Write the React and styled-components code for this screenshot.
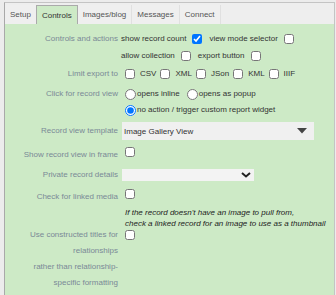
import React from 'react';
import styled, { createGlobalStyle } from 'styled-components';

const GlobalStyle = createGlobalStyle`
	html, body {
		margin: 0;
		padding: 0;
		background: #ececec;
		font-family: "Liberation Sans", Arial, sans-serif;
		font-size: 8px;
	}
`;

const TABS = ['Setup', 'Controls', 'Images/blog', 'Messages', 'Connect'];
const EXPORTS = ['CSV', 'XML', 'JSon', 'KML', 'IIIF'];

const App = () => {
	return (
		<>
			<GlobalStyle />
			<Frame>
				<TabBar>
					{TABS.map((tab) => (
						<Tab key={tab} $active={tab === 'Controls'}>{tab}</Tab>
					))}
				</TabBar>
				<Panel>
					<Row $top={0} $line={17}>
						<Label>Controls and actions</Label>
						<Value>
							<Option>show record count<Check type={'checkbox'} defaultChecked /></Option>
							<Option>view mode selector<Check type={'checkbox'} /></Option>
							<Option>allow collection<Check type={'checkbox'} /></Option>
							<Option>export button<Check type={'checkbox'} /></Option>
						</Value>
					</Row>
					<Row $top={2}>
						<Label>Limit export to</Label>
						<Value $indent={4}>
							{EXPORTS.map((fmt) => (
								<ExportOption key={fmt}><Check type={'checkbox'} />{fmt}</ExportOption>
							))}
						</Value>
					</Row>
					<Row $top={4}>
						<Label>Click for record view</Label>
						<Value>
							<RadioOption><Radio type={'radio'} name={'view'} />opens inline</RadioOption>
							<RadioOption><Radio type={'radio'} name={'view'} />opens as popup</RadioOption>
							<RadioOption $break><Radio type={'radio'} name={'view'} defaultChecked />no action / trigger custom report widget</RadioOption>
						</Value>
					</Row>
					<Row $top={4} $line={18}>
						<Label>Record view template</Label>
						<Value>
							<SelectBox $width={192}>
								<Select $height={18} $bg={'#f0f0f0'} defaultValue={'gallery'}>
									<option value={'gallery'}>Image Gallery View</option>
								</Select>
								<Arrow width={10} height={6} viewBox={'0 0 10 6'} $right={7}>
									<path d={'M0 0 L10 0 L5 5.5 Z'} fill={'#444'} />
								</Arrow>
							</SelectBox>
						</Value>
					</Row>
					<Row $top={7}>
						<Label>Show record view in frame</Label>
						<Value $indent={4}><Check type={'checkbox'} /></Value>
					</Row>
					<Row $top={6} $line={12}>
						<Label>Private record details</Label>
						<Value>
							<SelectBox $width={132}>
								<Select $height={12} $bg={'#f3f3f3'} defaultValue={''}>
									<option value={''}></option>
								</Select>
								<Arrow width={10} height={7} viewBox={'0 0 10 7'} $right={3}>
									<path d={'M1 1.5 L5 5 L9 1.5'} stroke={'#222'} strokeWidth={2} fill={'none'} />
								</Arrow>
							</SelectBox>
						</Value>
					</Row>
					<Row $top={8}>
						<Label>Check for linked media</Label>
						<Value $indent={4}><Check type={'checkbox'} /></Value>
					</Row>
					<Row $top={3} $line={10.5}>
						<Label />
						<Note>
							If the record doesn't have an image to pull from,<br />
							check a linked record for an image to use as a thumbnail
						</Note>
					</Row>
					<Row $top={-2}>
						<Label>
							Use constructed titles for relationships<br />
							rather than relationship-specific formatting
						</Label>
						<Value $indent={4} $start><Check type={'checkbox'} /></Value>
					</Row>
				</Panel>
			</Frame>
		</>
	);
};

const Frame = styled.div`
	display: flex;
	flex-direction: column;
	height: 293px;
	margin: 2px 1px 0 4px;
	border-top: 1px solid #c4c4c4;
	border-left: 1px solid #a9a9a9;
	border-right: 1px solid #c4c4c4;
`;

const TabBar = styled.div`
	display: flex;
	align-items: flex-end;
	height: 21px;
	background: #eeeeee;
	border-bottom: 0;
`;

const Tab = styled.div`
	box-sizing: border-box;
	height: 19px;
	line-height: 19px;
	padding: 0 5px;
	color: ${props => props.$active ? '#333' : '#555'};
	background: ${props => props.$active ? '#cdeac6' : '#efefef'};
	border-right: 1px solid ${props => props.$active ? '#aaa' : '#e0e0e0'};
	border-left: ${props => props.$active ? '1px solid #aaa' : '0'};
	border-top: ${props => props.$active ? '1px solid #aaa' : '0'};
	margin-left: ${props => props.$active ? '-1px' : '0'};
`;

const Panel = styled.div`
	flex: 1;
	background: #cdeac6;
	padding-top: 6px;
`;

const Row = styled.div`
	display: grid;
	grid-template-columns: 113px 1fr;
	column-gap: 3px;
	margin-top: ${props => props.$top}px;
	line-height: ${props => props.$line || 16}px;
	align-items: start;
`;

const Label = styled.div`
	padding-left: 13px;
	text-align: right;
	color: #7a8996;
	line-height: inherit;
`;

const Value = styled.div`
	display: flex;
	flex-wrap: wrap;
	align-items: center;
	min-height: ${props => props.$start ? '16px' : 'auto'};
	align-self: start;
	padding-left: ${props => props.$indent || 0}px;
	color: #333;
`;

const Option = styled.label`
	display: inline-flex;
	align-items: center;
	margin-right: 7px;

	input {
		margin-left: 6px;
	}
`;

const ExportOption = styled.label`
	display: inline-flex;
	align-items: center;
	margin-right: 4px;

	input {
		margin-right: 5px;
	}
`;

const RadioOption = styled.label`
	display: inline-flex;
	align-items: center;
	margin-right: 3px;
	${props => props.$break ? 'flex-basis: 100%;' : ''}
`;

const Check = styled.input`
	width: 10px;
	height: 10px;
	margin: 0;
	flex-shrink: 0;
`;

const Radio = styled.input`
	width: 11px;
	height: 11px;
	margin: 0 1px 0 4px;
	flex-shrink: 0;
`;

const SelectBox = styled.div`
	position: relative;
	width: ${props => props.$width}px;
	margin-left: 1px;
`;

const Select = styled.select`
	appearance: none;
	display: block;
	box-sizing: border-box;
	width: 100%;
	height: ${props => props.$height}px;
	margin: 0;
	padding: 0 0 0 2px;
	border: 0;
	border-radius: 0;
	outline: none;
	background: ${props => props.$bg};
	font-family: "Liberation Sans", Arial, sans-serif;
	font-size: 8px;
	color: #333;
`;

const Arrow = styled.svg`
	position: absolute;
	top: 50%;
	right: ${props => props.$right}px;
	transform: translateY(-50%);
	pointer-events: none;
`;

const Note = styled.div`
	padding-left: 4px;
	font-style: italic;
	color: #222;
`;

export default App;
